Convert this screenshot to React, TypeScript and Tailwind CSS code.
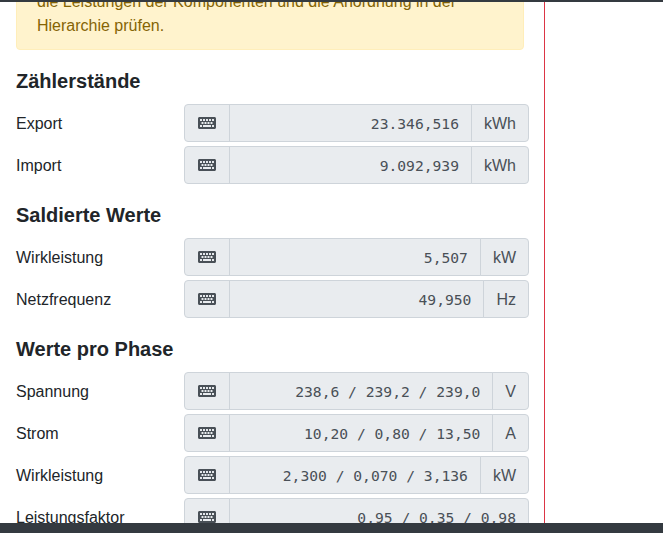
import { FaKeyboard } from "react-icons/fa";

function Row({ label, value, unit }: { label: string; value: string; unit?: string }) {
  return (
    <div className="flex h-[38px] mb-1 items-center">
      <div className="w-[168px] shrink-0 pt-[2px] text-[16px] leading-6 text-[#212529]">{label}</div>
      <div className="flex h-[38px] w-[345px] shrink-0 text-[#495057]">
        <div className="flex w-[46px] shrink-0 items-center justify-center rounded-l border border-[#ced4da] bg-[#e9ecef]">
          <FaKeyboard className="w-[18px] h-[16px]" />
        </div>
        {unit ? (
          <>
            <div className="flex-1 min-w-0 -ml-px border border-[#ced4da] bg-[#e9ecef] px-3 pt-[2px] flex items-center justify-end text-[14.65px] whitespace-pre font-['DejaVu_Sans_Mono',monospace]">
              {value}
            </div>
            <div className="flex shrink-0 -ml-px items-center rounded-r border border-[#ced4da] bg-[#e9ecef] px-3 pt-px text-[16px] leading-6">
              {unit}
            </div>
          </>
        ) : (
          <div className="flex-1 min-w-0 -ml-px rounded-r border border-[#ced4da] bg-[#e9ecef] px-3 pt-[2px] flex items-center justify-end text-[14.65px] whitespace-pre font-['DejaVu_Sans_Mono',monospace]">
            {value}
          </div>
        )}
      </div>
    </div>
  );
}

function Section({ title, children }: { title: string; children: React.ReactNode }) {
  return (
    <section className="mt-[19px]">
      <h5 className="mb-[11px] text-[20px] leading-6 font-bold text-[#212529]">{title}</h5>
      {children}
    </section>
  );
}

export default function App() {
  return (
    <div className="flex h-[533px] w-[663px] flex-col overflow-hidden bg-white font-['Liberation_Sans',Arial,sans-serif]">
      <div className="h-[2px] shrink-0 bg-[#343a40]" />
      <main className="min-h-0 flex-1 overflow-hidden">
        <div className="h-[1000px] w-[545px] border-r border-[#dc3545] pl-4 -mt-[26px]">
          <div className="w-[508px] rounded border border-[#ffeeba] bg-[#fff3cd] px-5 pt-[13px] pb-[11px] text-[16px] leading-6 text-[#856404]">
            die Leistungen der Komponenten und die Anordnung in der Hierarchie prüfen.
          </div>
          <Section title="Zählerstände">
            <Row label="Export" value="23.346,516" unit="kWh" />
            <Row label="Import" value="9.092,939" unit="kWh" />
          </Section>
          <Section title="Saldierte Werte">
            <Row label="Wirkleistung" value="5,507" unit="kW" />
            <Row label="Netzfrequenz" value="49,950" unit="Hz" />
          </Section>
          <Section title="Werte pro Phase">
            <Row label="Spannung" value="238,6 / 239,2 / 239,0" unit="V" />
            <Row label="Strom" value="10,20 / 0,80 / 13,50" unit="A" />
            <Row label="Wirkleistung" value="2,300 / 0,070 / 3,136" unit="kW" />
            <Row label="Leistungsfaktor" value="0,95 / 0,35 / 0,98" />
          </Section>
        </div>
      </main>
      <div className="h-[10px] shrink-0 bg-[#343a40]" />
    </div>
  );
}
